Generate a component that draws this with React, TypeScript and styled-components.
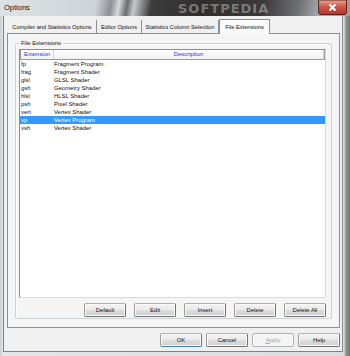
import React, { useState } from "react";
import styled, { createGlobalStyle } from "styled-components";

const GlobalStyle = createGlobalStyle`
  html, body {
    margin: 0;
    padding: 0;
    background: #5d6b58;
  }
  body {
    font-family: "Liberation Sans", Arial, sans-serif;
  }
`;

const extensions = [
  { ext: "fp", desc: "Fragment Program" },
  { ext: "frag", desc: "Fragment Shader" },
  { ext: "glsl", desc: "GLSL Shader" },
  { ext: "gsh", desc: "Geometry Shader" },
  { ext: "hlsl", desc: "HLSL Shader" },
  { ext: "psh", desc: "Pixel Shader" },
  { ext: "vert", desc: "Vertex Shader" },
  { ext: "vp", desc: "Vertex Program" },
  { ext: "vsh", desc: "Vertex Shader" },
];

const tabs = [
  { label: "Compiler and Statistics Options", width: 89 },
  { label: "Editor Options", width: 45 },
  { label: "Statistics Column Selection", width: 77 },
  { label: "File Extensions", width: 51 },
];

const App = () => {
  const [selected, setSelected] = useState(7);
  const [activeTab, setActiveTab] = useState(3);

  return (
    <>
      <GlobalStyle />
      <Window>
        <TitleBar>
          <Title>Options</Title>
          <Watermark>SOFTPEDIA</Watermark>
          <CloseBox>
            <svg width="29" height="15" viewBox="0 0 29 15">
              <defs>
                <linearGradient id="closeGrad" x1="0" y1="0" x2="0" y2="1">
                  <stop offset="0" stopColor="#eaa597" />
                  <stop offset="0.45" stopColor="#d0594a" />
                  <stop offset="1" stopColor="#b3342a" />
                </linearGradient>
              </defs>
              <path d="M0.5 0 V12 Q0.5 14.5 3 14.5 H26 Q28.5 14.5 28.5 12 V0 Z" fill="url(#closeGrad)" stroke="#5e231c" />
              <path d="M11.5 4.5 L17.5 10.5 M17.5 4.5 L11.5 10.5" stroke="#ffffff" strokeWidth="1.9" />
            </svg>
          </CloseBox>
        </TitleBar>
        <Client>
          <TabStrip>
            {tabs.map((t, i) => (
              <Tab
                key={t.label}
                $width={t.width}
                $active={i === activeTab}
                onClick={() => setActiveTab(i)}
              >
                {t.label}
              </Tab>
            ))}
          </TabStrip>
          <TabPanel>
            <GroupBox>
              <GroupLabel>File Extensions</GroupLabel>
              <ListView>
                <HeaderRow>
                  <HeaderCell $width={32}>Extension</HeaderCell>
                  <HeaderCell $grow>Description</HeaderCell>
                </HeaderRow>
                {extensions.map((e, i) => (
                  <Row
                    key={e.ext}
                    $selected={i === selected}
                    onClick={() => setSelected(i)}
                  >
                    <ExtCell>{e.ext}</ExtCell>
                    <DescCell>{e.desc}</DescCell>
                  </Row>
                ))}
              </ListView>
              <ButtonRow $gap={8}>
                <Button>Default</Button>
                <Button>Edit</Button>
                <Button>Insert</Button>
                <Button>Delete</Button>
                <Button>Delete All</Button>
              </ButtonRow>
            </GroupBox>
          </TabPanel>
          <DialogButtons>
            <Button $default>OK</Button>
            <Button>Cancel</Button>
            <Button disabled>
              <u>A</u>pply
            </Button>
            <Button>Help</Button>
          </DialogButtons>
        </Client>
      </Window>
    </>
  );
};

const Window = styled.div`
  position: relative;
  width: 350px;
  height: 356px;
  display: flex;
  flex-direction: column;
  box-sizing: border-box;
  background: linear-gradient(90deg, #c9cdd1 0px, #e4e6e8 3px, #dadcdf 344px, #8a918a 346px, #6f7d69 350px);
  padding: 0 7px 5px 3px;
`;

const TitleBar = styled.div`
  height: 16px;
  flex-shrink: 0;
  margin: 0 -7px 0 -3px;
  padding: 0 3px 0 3px;
  display: flex;
  align-items: flex-start;
  position: relative;
  background: linear-gradient(
    100deg,
    #dde2e7 0px,
    #cfd4d9 95px,
    #8c9095 110px,
    #d6d8da 118px,
    #6a6c6e 126px,
    #c6c8ca 133px,
    #3c3c3c 150px,
    #2e2e2e 200px,
    #3a3a3a 260px,
    #6e7072 295px,
    #a4a7aa 315px,
    #9aa09a 350px
  );
`;

const Title = styled.span`
  flex: 1;
  font-size: 7.5px;
  line-height: 16px;
  color: #111;
  padding-left: 1px;
`;

const Watermark = styled.span`
  position: absolute;
  left: 178px;
  top: 1px;
  font-family: "DejaVu Sans", sans-serif;
  font-weight: bold;
  font-size: 13px;
  letter-spacing: 1px;
  color: rgba(210, 210, 210, 0.45);
`;

const CloseBox = styled.span`
  display: block;
  width: 29px;
  height: 15px;
  flex-shrink: 0;
  position: relative;
  z-index: 3;
  svg {
    display: block;
  }
`;

const Client = styled.div`
  flex: 1;
  background: #f0f0f0;
  border-left: 1px solid #7d8288;
  border-right: 1px solid #8a8f95;
  border-bottom: 1px solid #7d8288;
  display: flex;
  flex-direction: column;
  padding: 3px 2px 4px 3px;
  font-size: 5.9px;
  color: #111;
`;

const TabStrip = styled.div`
  display: flex;
  align-items: flex-end;
  height: 14px;
  padding-left: 1px;
  position: relative;
  z-index: 1;
`;

const Tab = styled.div<{ $width: number; $active?: boolean }>`
  width: ${(p) => p.$width}px;
  height: ${(p) => (p.$active ? 15 : 13)}px;
  box-sizing: border-box;
  display: flex;
  align-items: center;
  justify-content: center;
  white-space: nowrap;
  font-size: 5.7px;
  border-right: 1px solid #8c8f94;
  border-top: ${(p) => (p.$active ? "1px solid #8c8f94" : "none")};
  border-left: ${(p) => (p.$active ? "1px solid #8c8f94" : "none")};
  background: ${(p) => (p.$active ? "#fafafa" : "transparent")};
  margin-bottom: ${(p) => (p.$active ? "-1px" : "0")};
  cursor: default;
`;

const TabPanel = styled.div`
  height: 295px;
  flex-shrink: 0;
  box-sizing: border-box;
  border: 1px solid #8c8f94;
  background: #f5f5f5;
  padding: 9px 7px 8px 7px;
  display: flex;
`;

const GroupBox = styled.div`
  flex: 1;
  position: relative;
  border: 1px solid #cfd2d5;
  border-radius: 2px;
  box-shadow: inset 1px 1px 0 #fff;
  padding: 5px 5px 1px 3px;
  display: flex;
  flex-direction: column;
`;

const GroupLabel = styled.span`
  position: absolute;
  top: -5px;
  left: 3px;
  padding: 0 2px;
  background: #f5f5f5;
  line-height: 8px;
`;

const ListView = styled.div`
  height: 249px;
  flex-shrink: 0;
  box-sizing: border-box;
  background: #fff;
  border: 1px solid #8a8e94;
  border-right-color: #d8dadc;
  border-bottom-color: #d8dadc;
`;

const HeaderRow = styled.div`
  display: flex;
  height: 10px;
  border: 1px solid #9a9a9a;
  border-top: none;
  box-sizing: border-box;
  background: linear-gradient(#fff, #f1f2f4);
`;

const HeaderCell = styled.div<{ $width?: number; $grow?: boolean }>`
  ${(p) => (p.$width ? `width: ${p.$width}px;` : "")}
  ${(p) => (p.$grow ? "flex: 1;" : "")}
  display: flex;
  align-items: center;
  justify-content: center;
  color: #2c2cf0;
  border-right: 1px solid #d4d5d8;
  line-height: 9px;
`;

const Row = styled.div<{ $selected?: boolean }>`
  display: flex;
  height: 8px;
  line-height: 8px;
  background: ${(p) => (p.$selected ? "#3399ff" : "transparent")};
  color: ${(p) => (p.$selected ? "#fff" : "#111")};
  white-space: nowrap;
`;

const ExtCell = styled.div`
  width: 33px;
  padding-left: 1px;
`;

const DescCell = styled.div`
  flex: 1;
`;

const ButtonRow = styled.div<{ $gap: number }>`
  display: flex;
  justify-content: flex-end;
  gap: ${(p) => p.$gap}px;
  margin-top: 5px;
`;

const DialogButtons = styled.div`
  display: flex;
  justify-content: flex-end;
  gap: 4px;
  margin-top: 5px;
`;

const Button = styled.button<{ $default?: boolean }>`
  width: 42px;
  height: 14px;
  padding: 0;
  box-sizing: border-box;
  font-family: inherit;
  font-size: 5.9px;
  color: #111;
  border: 1px solid ${(p) => (p.$default ? "#3c7fb1" : "#707070")};
  border-left-color: #9a9a9a;
  border-top-color: #b0b0b0;
  border-radius: 2px;
  background: linear-gradient(#f2f2f2, #ebebeb 50%, #dddddd 51%, #cfcfcf);
  box-shadow: inset 0 0 0 1px #fbfbfb;
  &:disabled {
    color: #a0a0a0;
    border-color: #adb2b5;
    background: #f4f4f4;
  }
  u {
    text-decoration: underline;
  }
`;

export default App;
